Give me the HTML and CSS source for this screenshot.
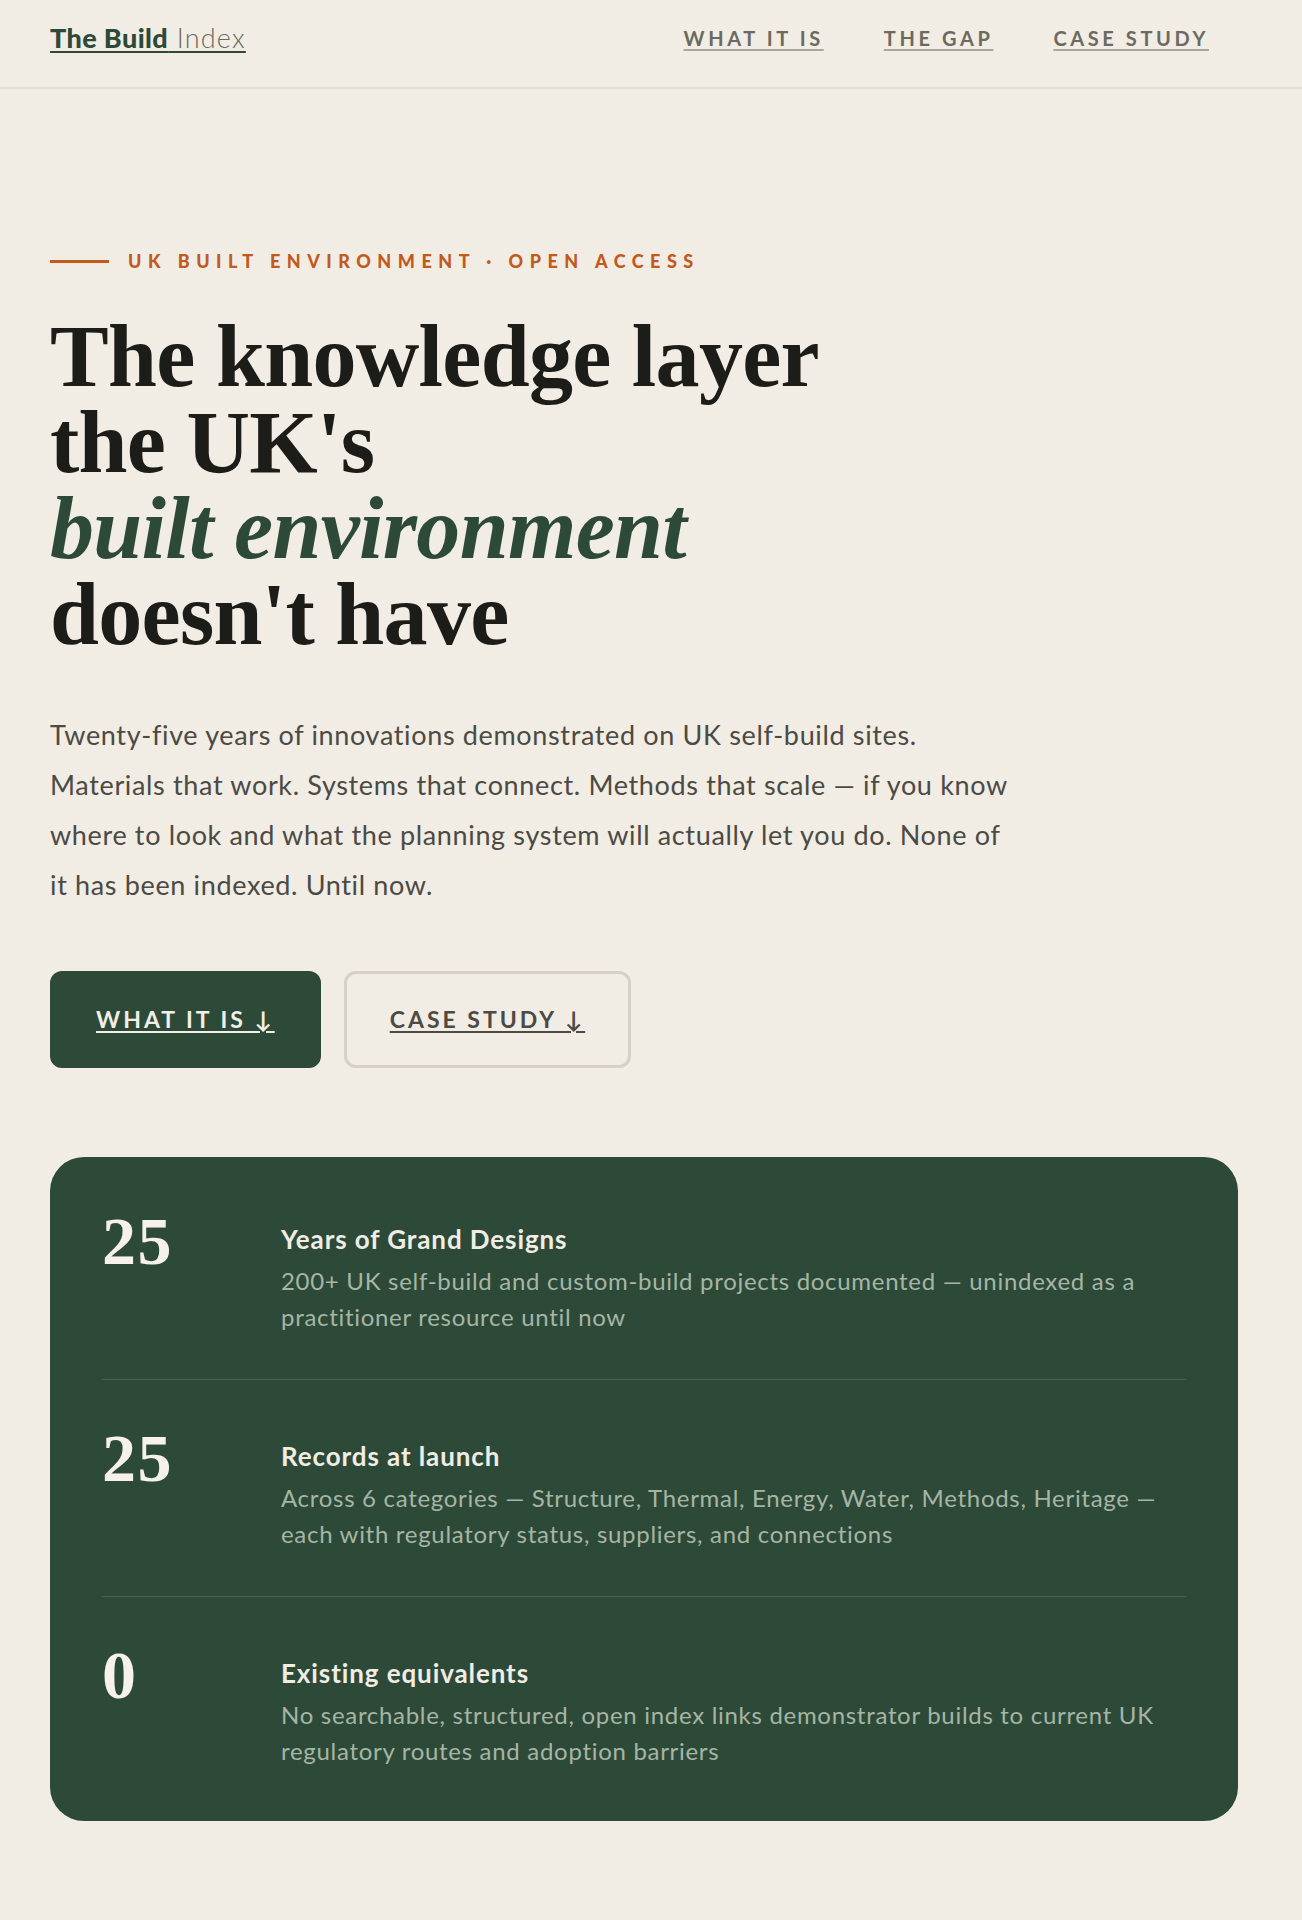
FILE: index.html
```html
<!DOCTYPE html>
<html lang="en">
<head>
    <meta charset="UTF-8">
    <meta name="viewport" content="width=device-width, initial-scale=1.0">
    <title>The Build Index</title>
    <link rel="stylesheet" href="styles.css">
</head>
<body>
    <header class="site-header">
        <a class="brand" href="#"><strong>The Build</strong> Index</a>
        <nav class="site-nav">
            <a href="#what">What it is</a>
            <a href="#gap">The gap</a>
            <a href="#case">Case study</a>
        </nav>
    </header>

    <main class="hero">
        <p class="eyebrow">UK Built Environment · Open Access</p>
        <h1 class="hero-title">The knowledge layer the UK's <em>built environment</em> doesn't have</h1>
        <p class="hero-lede">Twenty-five years of innovations demonstrated on UK self-build sites. Materials that work. Systems that connect. Methods that scale — if you know where to look and what the planning system will actually let you do. None of it has been indexed. Until now.</p>

        <div class="hero-actions">
            <a class="btn btn-primary" href="#what">What it is ↓</a>
            <a class="btn btn-ghost" href="#case">Case study ↓</a>
        </div>

        <section class="stats">
            <div class="stat">
                <div class="stat-num">25</div>
                <div class="stat-body">
                    <h3>Years of Grand Designs</h3>
                    <p>200+ UK self-build and custom-build projects documented — unindexed as a practitioner resource until now</p>
                </div>
            </div>
            <div class="stat">
                <div class="stat-num">25</div>
                <div class="stat-body">
                    <h3>Records at launch</h3>
                    <p>Across 6 categories — Structure, Thermal, Energy, Water, Methods, Heritage — each with regulatory status, suppliers, and connections</p>
                </div>
            </div>
            <div class="stat">
                <div class="stat-num">0</div>
                <div class="stat-body">
                    <h3>Existing equivalents</h3>
                    <p>No searchable, structured, open index links demonstrator builds to current UK regulatory routes and adoption barriers</p>
                </div>
            </div>
        </section>
    </main>
</body>
</html>
```

FILE: styles.css
```css
body {
    font-family: Lato, "Open Sans", sans-serif;
    background: #f1ece4;
    color: #1c1c18;
    margin: 0;
    padding: 0;
}
a {
    color: inherit;
}

/* top bar */
.site-header {
    display: flex;
    justify-content: space-between;
    align-items: center;
    height: 89px;
    box-sizing: border-box;
    padding: 0 93px 12px 50px;
    border-bottom: 2px solid #e4ded3;
}
.brand {
    font-size: 27px;
    line-height: 30px;
    letter-spacing: 1.2px;
    color: #6b6a60;
    font-weight: 300;
    text-decoration: underline;
    text-decoration-color: #2d4a38;
    text-underline-offset: 3px;
}
.brand strong {
    color: #2d4a38;
    font-weight: 900;
    letter-spacing: 0.4px;
}
.site-nav {
    display: flex;
    gap: 60px;
}
.site-nav a {
    font-size: 20px;
    line-height: 24px;
    font-weight: 700;
    letter-spacing: 3.6px;
    text-transform: uppercase;
    color: #6b6a60;
    text-decoration-color: #aaa69b;
    text-decoration-thickness: 2px;
    text-underline-offset: 3px;
}

/* hero */
.hero {
    padding: 161px 64px 120px 50px;
}
.eyebrow {
    display: flex;
    align-items: center;
    gap: 19px;
    margin: 0;
    font-size: 18px;
    line-height: 22px;
    font-weight: 900;
    letter-spacing: 6.5px;
    text-transform: uppercase;
    color: #c25a1c;
}
.eyebrow::before {
    content: "";
    width: 59px;
    height: 3px;
    background: #c25a1c;
}
.hero-title {
    max-width: 840px;
    margin: 42px 0 0;
    font-family: "Liberation Serif", "DejaVu Serif", serif;
    font-size: 88px;
    line-height: 86px;
    font-weight: 700;
    letter-spacing: -0.7px;
    color: #1c1c18;
}
.hero-title em {
    display: block;
    color: #2d4a38;
}
.hero-lede {
    max-width: 972px;
    margin: 52px 0 0;
    font-size: 27px;
    line-height: 50px;
    letter-spacing: 0.65px;
    color: #4b4a43;
}
.hero-actions {
    display: flex;
    gap: 23px;
    margin-top: 61px;
}
.btn {
    padding: 33px 43px;
    border: 3px solid #2d4a38;
    border-radius: 12px;
    font-size: 23px;
    line-height: 25px;
    font-weight: 700;
    letter-spacing: 3px;
    text-transform: uppercase;
    text-underline-offset: 3px;
}
.btn-primary {
    background: #2d4a38;
    color: #f3efe8;
}
.btn-ghost {
    border-color: #d6d1c4;
    color: #4b4a43;
}

/* numbers panel */
.stats {
    margin-top: 89px;
    padding: 6px 52px 8px;
    background: #2d4a38;
    border-radius: 34px;
}
.stat {
    display: grid;
    grid-template-columns: 179px 1fr;
    padding: 44px 0;
    border-bottom: 1px solid rgba(255, 255, 255, 0.13);
}
.stat:last-child {
    border-bottom: none;
}
.stat-num {
    font-family: "Liberation Serif", "DejaVu Serif", serif;
    font-size: 68px;
    line-height: 1;
    font-weight: 700;
    letter-spacing: 1.5px;
    color: #f6f2eb;
}
.stat-body {
    padding-top: 17px;
}
.stat-body h3 {
    margin: 0;
    font-size: 26px;
    line-height: 31px;
    font-weight: 700;
    letter-spacing: 0.9px;
    color: #f1ede5;
}
.stat-body p {
    margin: 8px 0 0;
    font-size: 24px;
    line-height: 36px;
    letter-spacing: 0.7px;
    color: #a6b5a6;
}
```
